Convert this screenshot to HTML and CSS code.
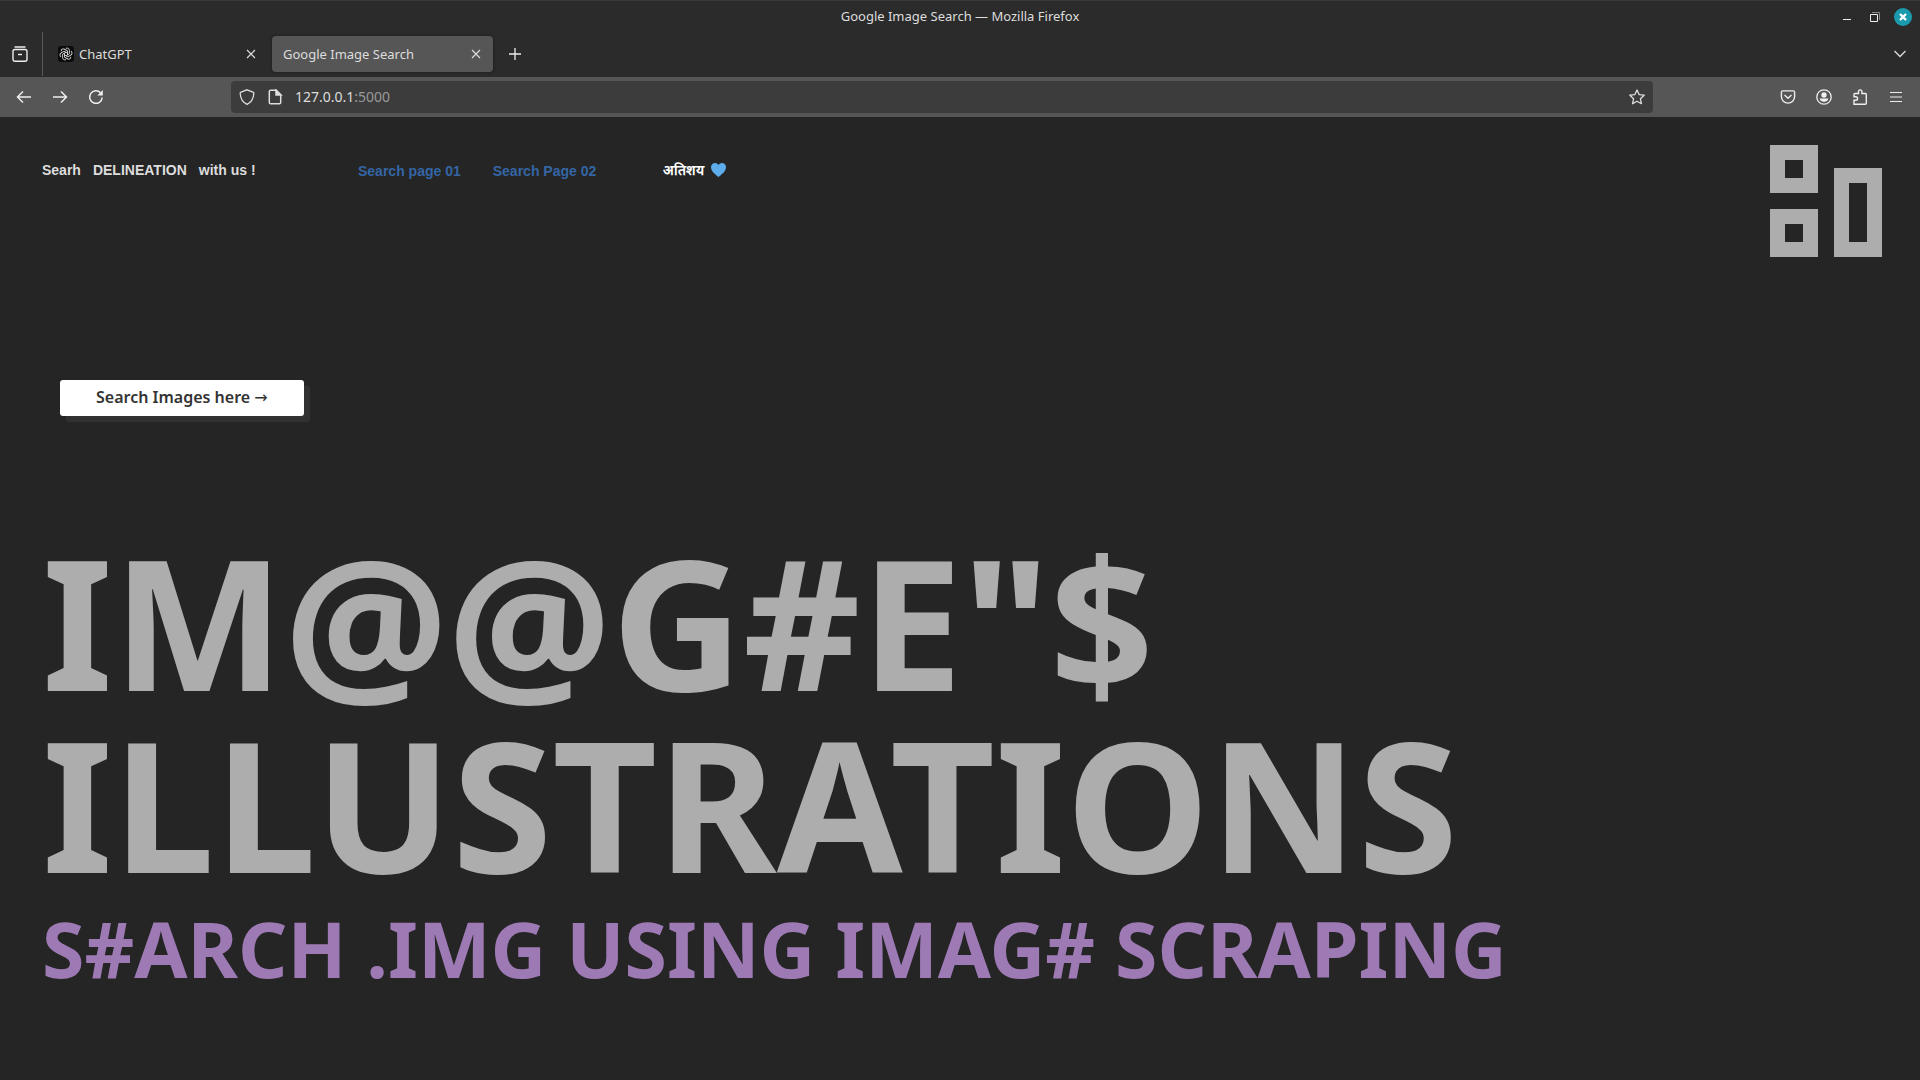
FILE: index.html
```html
<!DOCTYPE html>
<html lang="en">
<head>
<meta charset="utf-8">
<title>Google Image Search</title>
<link rel="stylesheet" href="styles.css">
</head>
<body>
<div class="window">
  <header class="titlebar">
    <span class="window-title">Google Image Search — Mozilla Firefox</span>
    <div class="window-controls">
      <button class="icon-btn" aria-label="Minimize"><svg width="18" height="18"><path d="M5 11.5h8" stroke="#eee"/></svg></button>
      <button class="icon-btn" aria-label="Restore"><svg width="18" height="18" fill="none"><path d="M6 4.5h7.5V12" stroke="#888"/><path d="M4.500 6.500h7v7h-7z" stroke="#eee"/></svg></button>
      <button class="icon-btn" aria-label="Close window"><svg width="18" height="18"><circle cx="9" cy="9" r="9" fill="#1a9bad"/><path d="M6 6l6 6M12 6l-6 6" stroke="#fff" stroke-width="2.400"/></svg></button>
    </div>
  </header>

  <div class="tabstrip">
    <button class="icon-btn view-btn" aria-label="Firefox View"><svg width="16" height="16" fill="none" stroke="#eee" stroke-width="1.400"><path d="M3 1h10" stroke-linecap="round"/><rect x="1" y="3.500" width="14" height="11.800" rx="2"/><path d="M6 8.500h4"/></svg></button>
    <div class="tab">
      <svg class="favicon" width="16" height="16"><rect width="16" height="16" rx="3" fill="#0c0c0c"/><g fill="none" stroke="#ddd" stroke-width="0.900"><path id="petal" d="M8 2.400c1.400-.9 3.400 0 3.400 2v3.400L8 9.800"/><use href="#petal" transform="rotate(60 8 8)"/><use href="#petal" transform="rotate(120 8 8)"/><use href="#petal" transform="rotate(180 8 8)"/><use href="#petal" transform="rotate(240 8 8)"/><use href="#petal" transform="rotate(300 8 8)"/></g></svg>
      <span class="tab-label">ChatGPT</span>
      <button class="icon-btn" aria-label="Close tab"><svg width="10" height="10"><path d="M1 1l8 8M9 1L1 9" stroke="#ddd" stroke-width="1.100"/></svg></button>
    </div>
    <div class="tab tab-active">
      <span class="tab-label">Google Image Search</span>
      <button class="icon-btn" aria-label="Close tab"><svg width="10" height="10"><path d="M1 1l8 8M9 1L1 9" stroke="#ddd" stroke-width="1.100"/></svg></button>
    </div>
    <button class="icon-btn new-tab" aria-label="New tab"><svg width="12" height="12"><path d="M6 0v12M0 6h12" stroke="#eee" stroke-width="1.300"/></svg></button>
    <button class="icon-btn all-tabs" aria-label="List all tabs"><svg width="12" height="8" fill="none"><path d="M.5 1L6 6.500 11.500 1" stroke="#ddd" stroke-width="1.300"/></svg></button>
  </div>

  <div class="toolbar">
    <div class="nav-buttons">
      <button class="icon-btn" aria-label="Back"><svg width="16" height="16" fill="none" stroke="#eee" stroke-width="1.500"><path d="M15 8H1.500M7 2.500L1.500 8 7 13.500"/></svg></button>
      <button class="icon-btn" aria-label="Forward"><svg width="16" height="16" fill="none" stroke="#eee" stroke-width="1.500"><path d="M1 8h13.500M9 2.500L14.500 8 9 13.500"/></svg></button>
      <button class="icon-btn" aria-label="Reload"><svg width="16" height="16" fill="none" stroke="#eee" stroke-width="1.500"><path d="M14.200 8.500A6.300 6.300 0 1 1 12.600 3.800"/><path d="M14.800 1v5.500H9.300z" fill="#eee" stroke="none"/></svg></button>
    </div>
    <div class="urlbar">
      <svg width="16" height="16" fill="none" stroke="#ddd" stroke-width="1.300"><path d="M8 .8l6 2.400c.6.200.9.700.8 1.300C14.500 9.500 12 13.500 8 15.300 4 13.500 1.500 9.500 1.200 4.500c-.1-.6.200-1.100.8-1.300z"/></svg>
      <svg width="16" height="16" fill="none" stroke="#ddd" stroke-width="1.500"><path d="M3.800 1.300H9L13.700 6v7.500a1.300 1.300 0 0 1-1.300 1.300H3.600a1.300 1.300 0 0 1-1.300-1.300v-11a1.300 1.300 0 0 1 1.300-1.200z"/><path d="M9 1v5h5z" fill="#ddd"/></svg>
      <div class="url">127.0.0.1<span class="port">:5000</span></div>
      <button class="icon-btn" aria-label="Bookmark this page"><svg width="16" height="16" fill="none" stroke="#ddd" stroke-width="1.300" stroke-linejoin="round"><path d="M8 1l2.100 4.600 5.100.6-3.800 3.500 1 5L8 12.200 3.600 14.700l1-5L.8 6.200l5.100-.6z"/></svg></button>
    </div>
    <div class="tool-buttons">
      <button class="icon-btn" aria-label="Save to Pocket"><svg width="16" height="16" fill="none" stroke="#eee" stroke-width="1.400"><path d="M2.700 1.900h10.600c.8 0 1.300.5 1.300 1.300V7.500a6.600 6.600 0 0 1-13.200 0V3.200c0-.8.500-1.300 1.300-1.300z"/><path d="M4.500 6L8 9.300 11.500 6"/></svg></button>
      <button class="icon-btn" aria-label="Account"><svg width="16" height="16"><circle cx="8" cy="8" r="7.200" fill="none" stroke="#eee" stroke-width="1.300"/><circle cx="8" cy="6" r="2.700" fill="#eee"/><path d="M3.500 9.600h9c-.4 2-2.300 3.300-4.500 3.300s-4.100-1.300-4.500-3.300z" fill="#eee"/></svg></button>
      <button class="icon-btn" aria-label="Extensions"><svg width="16" height="16" fill="none" stroke="#eee" stroke-width="1.400"><path d="M2 15.200h11.300a1 1 0 0 0 1-1V5.500a1 1 0 0 0-1-1H9.900V2.600a1.700 1.700 0 0 0-3.400 0v1.900H3a1 1 0 0 0-1 1V7.700h1.800a1.800 1.800 0 0 1 0 3.600H2z"/></svg></button>
      <button class="icon-btn" aria-label="Menu"><svg width="16" height="16"><path d="M2 3.500h12M2 8h12M2 12.500h12" stroke="#eee" stroke-width="1.200"/></svg></button>
    </div>
  </div>

  <main class="page">
    <nav class="site-nav">
      <p class="tagline"><span>Searh</span><span>DELINEATION</span><span>with us !</span></p>
      <div class="links"><a href="#one">Search page 01</a><a href="#two">Search Page 02</a></div>
      <p class="author" lang="hi">अतिशय <svg width="15" height="14" viewBox="0 0 15 14"><path d="M7.500 14C5 12 0 8.500 0 4.300 0 1.800 1.800 0 4 0c1.500 0 2.800.8 3.500 2C8.200.8 9.500 0 11 0c2.200 0 4 1.800 4 4.300C15 8.500 10 12 7.500 14z" fill="#5dadec"/></svg></p>
      <div class="logo">
        <div class="logo-col"><div class="block"></div><div class="block"></div></div>
        <div class="block block-tall"></div>
      </div>
    </nav>
    <button class="search-btn">Search Images here <span class="arrow">→</span></button>
    <h1 class="headline">IM@@G#E"$<br>ILLUSTRATIONS</h1>
    <h2 class="subline">S#ARCH .IMG USING IMAG# SCRAPING</h2>
  </main>
</div>
</body>
</html>
```
FILE: styles.css
```css
* {
  box-sizing: border-box;
}

body {
  margin: 0;
  background: #252525;
  color: #ddd;
  font-family: "Noto Sans", sans-serif;
  font-size: 13px;
}

h1,
h2,
p {
  margin: 0;
}

.window {
  min-height: 100vh;
  display: flex;
  flex-direction: column;
}

.icon-btn {
  display: flex;
  padding: 0;
  border: 0;
  background: none;
}

svg {
  display: block;
  flex: none;
}

/* Window title bar */
.titlebar {
  display: grid;
  grid-template-columns: 1fr auto 1fr;
  align-items: center;
  height: 32px;
  padding: 0 8px;
  border-top: 1px solid #393939;
  background: #2b2b2b;
}

.window-title {
  grid-column: 2;
  padding-bottom: 2px;
}

.window-controls {
  display: flex;
  justify-content: flex-end;
  gap: 10px;
}

/* Tabs */
.tabstrip {
  display: flex;
  align-items: center;
  height: 45px;
  padding: 0 14px 1px 0;
  background: #2b2b2b;
}

.view-btn {
  align-items: center;
  align-self: stretch;
  width: 43px;
  padding-left: 12px;
  border-right: 1px solid #585858;
}

.tab {
  display: flex;
  align-items: center;
  width: 221px;
  height: 36px;
  margin-left: 4px;
  padding: 0 12px 0 11px;
  border-radius: 4px;
}

.tab-active {
  background: #565656;
  box-shadow: 0 0 3px #1c1c1c;
}

.favicon {
  margin-right: 5px;
}

.tab-label {
  flex: 1;
}

.new-tab {
  margin-left: 16px;
}

.all-tabs {
  margin-left: auto;
}

/* Navigation toolbar */
.toolbar {
  display: flex;
  align-items: center;
  height: 40px;
  padding: 0 16px;
  background: #565656;
}

.nav-buttons {
  display: flex;
  gap: 20px;
  width: 215px;
}

.urlbar {
  display: flex;
  flex: 1;
  align-items: center;
  gap: 12px;
  height: 32px;
  padding: 0 8px;
  border-radius: 4px;
  background: #3c3c3c;
}

.url {
  flex: 1;
  padding-bottom: 1px;
  font-size: 14px;
}

.port {
  color: #999;
}

.tool-buttons {
  display: flex;
  justify-content: flex-end;
  gap: 20px;
  width: 251px;
}

/* Page */
.page {
  display: flex;
  flex: 1;
  flex-direction: column;
  align-items: flex-start;
  padding: 28px 38px 32px 42px;
}

.site-nav {
  display: flex;
  align-self: stretch;
  align-items: flex-start;
  font: bold 14px/20px "Liberation Sans", sans-serif;
}

.tagline {
  display: flex;
  gap: 12px;
  width: 316px;
  padding-top: 15px;
}

.links {
  display: flex;
  gap: 32px;
  width: 305px;
  padding-top: 16px;
}

.links a {
  color: #3465a4;
  text-decoration: none;
}

.author {
  display: flex;
  align-items: center;
  gap: 7px;
  padding-top: 15px;
  color: #fff;
}

.logo {
  display: flex;
  align-items: flex-end;
  gap: 16px;
  margin-left: auto;
}

.logo-col {
  display: grid;
  gap: 16px;
}

.block {
  width: 48px;
  height: 48px;
  border: 15px solid #adadad;
}

.block-tall {
  height: 89px;
}

.search-btn {
  height: 36px;
  margin: 123px 0 0 18px;
  padding: 0 36px 2px;
  border: 0;
  border-radius: 3px;
  background: #fff;
  box-shadow: 6px 6px 0 #313131;
  color: #333;
  font: 600 16px/20px "Noto Sans", sans-serif;
}

.arrow {
  font-family: "DejaVu Sans", sans-serif;
  font-weight: 400;
}

.headline {
  margin-top: 113px;
  color: #adadad;
  font-size: 182px;
  line-height: 182px;
}

.subline {
  padding-top: 3px;
  color: #9e7ab5;
  font-size: 77px;
  line-height: 106px;
}
```
